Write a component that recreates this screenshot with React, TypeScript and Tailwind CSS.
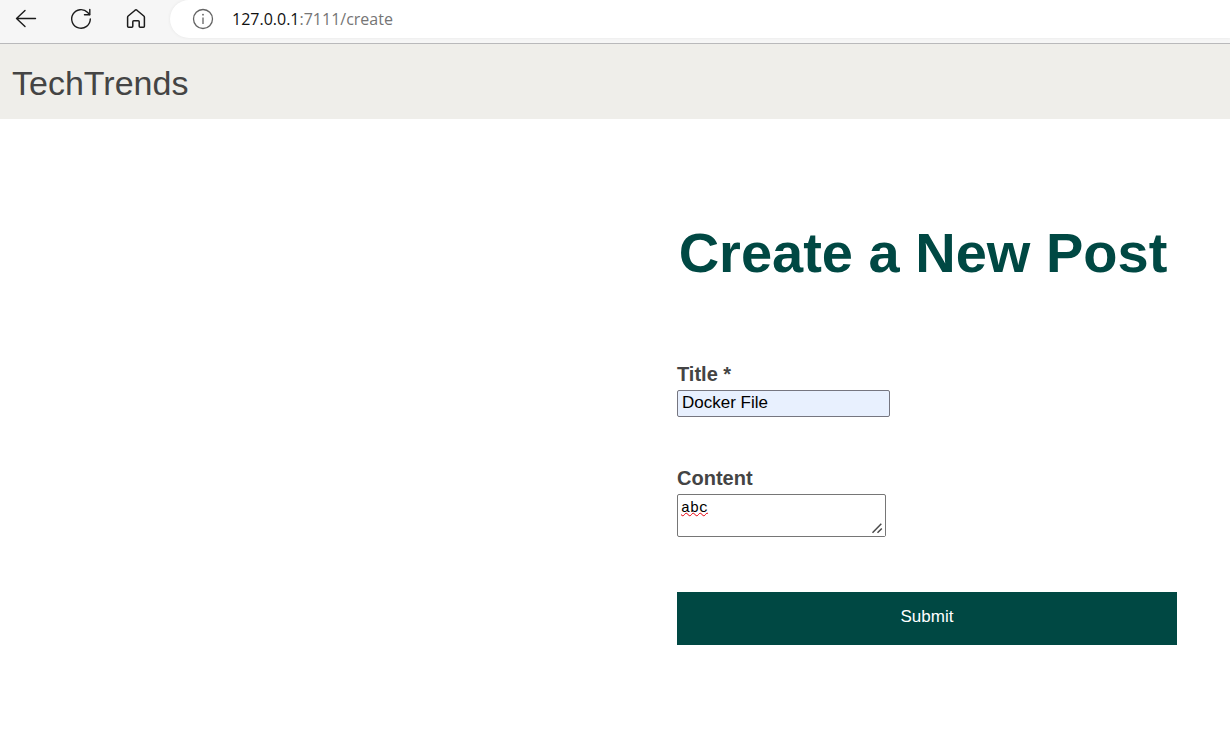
import React from "react";

const iconButton = "flex size-6 items-center justify-center text-[#1b1b1b]";

function BackIcon() {
  return (
    <svg width="24" height="24" viewBox="0 0 24 24" fill="none" stroke="currentColor" strokeWidth="1.4" strokeLinecap="round" strokeLinejoin="round" aria-hidden="true">
      <path d="M21.500 11.500H2.500M11 3.500L2.500 11.500l8.500 8" />
    </svg>
  );
}

function ReloadIcon() {
  return (
    <svg width="24" height="24" viewBox="0 0 24 24" fill="none" stroke="currentColor" strokeWidth="1.4" strokeLinecap="round" strokeLinejoin="round" aria-hidden="true">
      <path d="M21.300 12a9.300 9.300 0 1 1-2.600-6.500l1.800 1.900" />
      <path d="M20.800 2.500v5.200h-5.300" />
    </svg>
  );
}

function HomeIcon() {
  return (
    <svg width="24" height="24" viewBox="0 0 24 24" fill="none" stroke="currentColor" strokeWidth="1.500" strokeLinejoin="round" aria-hidden="true">
      <path d="M3.600 10.300q0-.8.600-1.300l6.900-5.800q.9-.7 1.800 0L19.800 9q.6.500.600 1.300v9q0 1-1 1h-3.200q-1 0-1-1v-4.500q0-1-1-1H9.800q-1 0-1 1v4.500q0 1-1 1H4.600q-1 0-1-1z" />
    </svg>
  );
}

function InfoIcon() {
  return (
    <svg width="22" height="22" viewBox="0 0 22 22" fill="none" stroke="currentColor" strokeWidth="1.300" aria-hidden="true">
      <circle cx="11" cy="11" r="9.500" />
      <path d="M11 9.500v6.500" />
      <circle cx="11" cy="6.700" r="0.900" fill="currentColor" stroke="none" />
    </svg>
  );
}

function ResizeGrip() {
  return (
    <svg width="12" height="12" viewBox="0 0 12 12" fill="none" stroke="#4a4a4a" strokeWidth="1.500" aria-hidden="true" className="pointer-events-none absolute bottom-[3px] right-[3px]">
      <path d="M1.500 10.800L10.300 1.800M6.500 10.800L10.800 6.400" />
    </svg>
  );
}

function BrowserBar() {
  return (
    <div className="flex h-11 items-start border-b border-[#b9b9bb] bg-[#f6f6f6]">
      <nav aria-label="Browser" className="flex gap-[31px] pl-3.5 pr-[22px] pt-[7px]">
        <button type="button" aria-label="Back" className={iconButton}><BackIcon /></button>
        <button type="button" aria-label="Reload" className={iconButton}><ReloadIcon /></button>
        <button type="button" aria-label="Home" className={iconButton}><HomeIcon /></button>
      </nav>
      <div className="flex h-[38px] grow items-center gap-[18px] rounded-l-full bg-white pl-[22px] shadow-[0_0_3px_#e4e4e4]">
        <button type="button" aria-label="Site information" className="text-[#646464]"><InfoIcon /></button>
        <div className="font-['Open_Sans',sans-serif] text-base text-[#757575]">
          <span className="text-[#111]">127.0.0.1</span>:7111/create
        </div>
      </div>
    </div>
  );
}

export default function App() {
  return (
    <div className="min-h-screen bg-white font-['Liberation_Sans',Arial,sans-serif] text-[#444]">
      <BrowserBar />
      <header className="bg-[#efeeea] px-3 pb-3 pt-[15px]">
        <a href="#" className="block text-[34px] leading-[48px]">TechTrends</a>
      </header>
      <main className="flex justify-end pr-[53px] pt-[98px]">
        <form className="flex w-[500px] flex-col items-start" onSubmit={(e) => e.preventDefault()}>
          <h1 className="w-full whitespace-nowrap pr-2 text-center text-[56px] font-bold leading-[72px] text-[#004843]">Create a New Post</h1>
          <label htmlFor="title" className="mt-[73px] text-xl leading-6 font-bold">Title *</label>
          <input
            id="title"
            name="title"
            defaultValue="Docker File"
            className="mt-1 h-[27px] w-[213px] rounded-[2px] border border-[#767680] bg-[#e8f0fe] px-1 pb-0.5 text-[17px] leading-5 text-black"
          />
          <label htmlFor="content" className="mt-[49px] text-xl leading-6 font-bold">Content</label>
          <div className="relative mt-1 flex">
            <textarea
              id="content"
              name="content"
              defaultValue="abc"
              spellCheck={false}
              className="h-[43px] w-[209px] resize rounded-[2px] border border-[#767676] bg-white px-[3px] py-[5px] font-['Liberation_Mono',monospace] text-[15px] leading-[18px] text-black underline decoration-red-600 decoration-wavy decoration-1 underline-offset-0 [&::-webkit-resizer]:bg-white"
            />
            <ResizeGrip />
          </div>
          <button type="submit" className="mt-[55px] h-[53px] w-full bg-[#004843] pb-1 text-[17px] leading-6 text-white">Submit</button>
        </form>
      </main>
    </div>
  );
}
